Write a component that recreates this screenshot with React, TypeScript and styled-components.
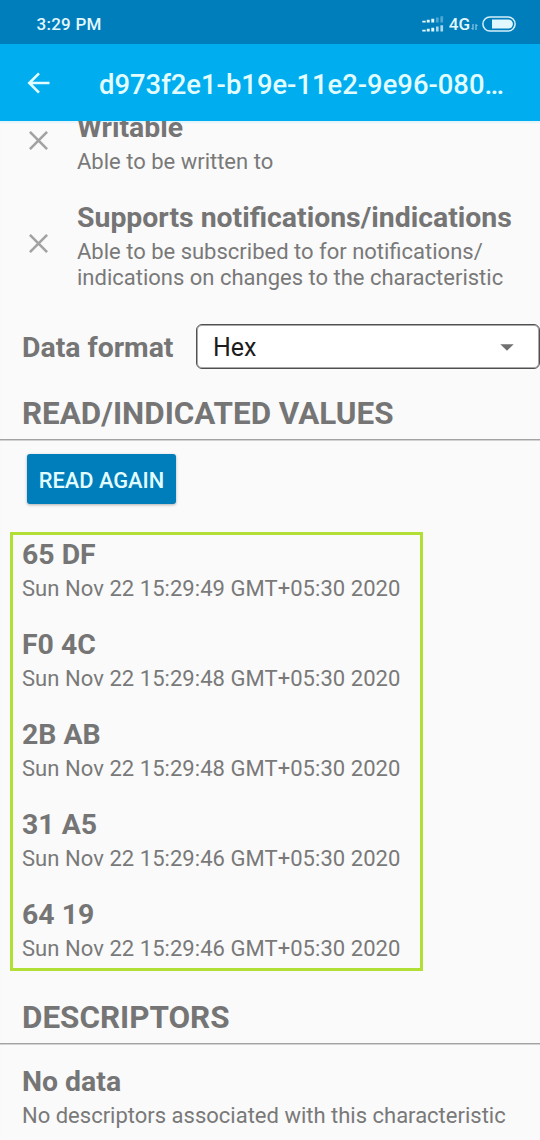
import React from 'react';
import styled, { createGlobalStyle } from 'styled-components';

const GlobalStyle = createGlobalStyle`
  * { box-sizing: border-box; }
  body {
    margin: 0;
    background: #fafafa;
    font-family: Roboto, "Liberation Sans", sans-serif;
    color: #757575;
  }
  svg { flex: none; display: block; }
`;

const Screen = styled.div`
  display: flex;
  flex-direction: column;
  width: 540px;
  height: 1140px;
  overflow: hidden;
  background: #fafafa;
`;

const StatusBar = styled.div`
  display: flex;
  flex: none;
  align-items: center;
  justify-content: space-between;
  height: 44px;
  padding: 4px 24px 0 36.5px;
  background: #007dbb;
  color: #e2f8ff;
`;

const Clock = styled.span`
  font-size: 17px;
  font-weight: 500;
  line-height: 20px;
  letter-spacing: 0.25px;
`;

const StatusIcons = styled.div`
  display: flex;
  align-items: center;
`;

const Network = styled.span`
  margin: 0 1px 0 5px;
  font-size: 17px;
  font-weight: 500;
  line-height: 20px;
`;

const ArrowsSlot = styled.span`
  padding: 6px 4px 0 0;
`;

const AppBar = styled.header`
  display: flex;
  flex: none;
  align-items: center;
  height: 77px;
  padding: 0 30px 0 27px;
  background: #00adef;
  color: #e2fdff;
`;

const Title = styled.h1`
  flex: 1;
  margin: 0 0 0 49px;
  padding-top: 5px;
  font-size: 27.4px;
  font-weight: 500;
  line-height: 33px;
  white-space: nowrap;
`;

const Content = styled.main`
  flex: 1;
  min-height: 0;
  overflow: hidden;
  box-shadow: inset 0 2px 1px #e3f4fb;
`;

const PropertyList = styled.div`
  display: flex;
  flex-direction: column;
  gap: 26px;
  margin-top: -10px;
`;

const Property = styled.div`
  display: flex;
  align-items: center;
  padding-left: 29px;
`;

const CrossSlot = styled.span`
  display: flex;
  width: 48px;
  padding-bottom: 5px;
`;

const Heading = styled.div`
  font-size: 28.4px;
  font-weight: 700;
  line-height: 33px;
  white-space: nowrap;
`;

const Detail = styled.div<{ $spacing?: number }>`
  margin-top: 5px;
  color: #797979;
  font-size: 22px;
  line-height: 26px;
  letter-spacing: ${(p) => p.$spacing ?? 0}px;
  white-space: nowrap;
`;

const FormatRow = styled.div`
  display: flex;
  align-items: center;
  margin-top: 33px;
  padding-left: 22px;
`;

const FormatLabel = styled(Heading)`
  padding-top: 2px;
`;

const Select = styled.div`
  display: flex;
  align-items: center;
  justify-content: space-between;
  width: 344px;
  height: 45px;
  margin-left: auto;
  padding: 2px 25px 0 16px;
  border: 1px solid #505050;
  border-radius: 6px;
  background: #fff;
  box-shadow: inset 0 0 0 1px #a8a8a8;
  color: #1c1c1c;
  font-size: 25px;
`;

const SectionTitle = styled.h2<{ $top: number }>`
  margin: ${(p) => p.$top}px 0 0;
  padding: 0 22px 8px;
  border-bottom: 1px solid #a3a3a3;
  box-shadow: 0 1px 0 #d2d2d2;
  font-size: 31.4px;
  font-weight: 700;
  line-height: 35px;
  white-space: nowrap;
`;

const ReadButton = styled.button`
  display: block;
  width: 149px;
  height: 50px;
  margin: 14px 0 0 27px;
  padding: 3px 0 0;
  border: 0;
  border-radius: 3px;
  background: #007dbb;
  box-shadow: 0 1px 3px rgba(0, 0, 0, 0.3);
  color: #e2fdff;
  font-family: inherit;
  font-size: 21.8px;
  font-weight: 500;
  line-height: 25px;
`;

const Readings = styled.div`
  display: flex;
  flex-direction: column;
  gap: 26px;
  width: 413px;
  height: 439px;
  margin: 28px 0 0 10px;
  padding: 3px 9px 0;
  border: 3px solid #b2df35;
`;

const Empty = styled.div`
  padding: 21px 22px 0;
`;

const Cross = () => (
  <svg width="19" height="19" viewBox="0 0 19 19" fill="none" stroke="#a2a2a2" strokeWidth="2.6">
    <path d="M0.9 0.9 18.1 18.1M18.1 0.9 0.9 18.1" />
  </svg>
);

const Signal = () => (
  <svg width="22" height="17" viewBox="0 0 22 17" fill="#e2f8ff">
    {[0, 9].map((y) => (
      <g key={y} transform={`translate(0 ${y})`}>
        <path d="M0.3 4.7h3.4v1.8H0.3zM4.8 3.8h2.9v2.7H4.8zM9.3 2.8h2.9v3.7H9.3z" />
        <path d="M14 1.6h2.6v4.9H14zM18.4 0.3h2.7v6.2h-2.7z" opacity={y ? 0.75 : 0.35} />
      </g>
    ))}
  </svg>
);

const DataArrows = () => (
  <svg width="7" height="8" viewBox="0 0 7 8" fill="none" stroke="#a9d8ee" strokeWidth="1">
    <path d="M2 1v5.5M2 6.5 0.5 5M5 7V1.5M5 1.5 6.5 3" />
  </svg>
);

const Battery = () => (
  <svg width="34" height="16" viewBox="0 0 34 16">
    <rect x="0.9" y="0.9" width="32.2" height="14.2" rx="7.1" fill="none" stroke="#d4f1fc" strokeWidth="1.5" />
    <path d="M10 3.4h16.3a4.6 4.6 0 0 1 0 9.2H10z" fill="#e2f8ff" />
  </svg>
);

const BackArrow = () => (
  <svg width="23" height="22" viewBox="0 0 23 22" fill="none" stroke="#e2fdff" strokeWidth="2.6">
    <path d="M22.5 11H3M12 1.3 2.3 11 12 20.7" />
  </svg>
);

const Caret = () => (
  <svg width="14" height="7" viewBox="0 0 14 7" fill="#707070">
    <path d="M0.3 0.2h13.4L7 6.8z" />
  </svg>
);

const readings = [
  { value: '65 DF', time: '15:29:49' },
  { value: 'F0 4C', time: '15:29:48' },
  { value: '2B AB', time: '15:29:48' },
  { value: '31 A5', time: '15:29:46' },
  { value: '64 19', time: '15:29:46' },
];

export default function App() {
  return (
    <Screen>
      <GlobalStyle />
      <StatusBar>
        <Clock>3:29 PM</Clock>
        <StatusIcons>
          <Signal />
          <Network>4G</Network>
          <ArrowsSlot><DataArrows /></ArrowsSlot>
          <Battery />
        </StatusIcons>
      </StatusBar>
      <AppBar>
        <BackArrow />
        <Title>d973f2e1-b19e-11e2-9e96-080…</Title>
      </AppBar>
      <Content>
        <PropertyList>
          <Property>
            <CrossSlot><Cross /></CrossSlot>
            <div>
              <Heading>Writable</Heading>
              <Detail>Able to be written to</Detail>
            </div>
          </Property>
          <Property>
            <CrossSlot><Cross /></CrossSlot>
            <div>
              <Heading>Supports notifications/indications</Heading>
              <Detail>
                Able to be subscribed to for notifications/
                <br />
                indications on changes to the characteristic
              </Detail>
            </div>
          </Property>
        </PropertyList>
        <FormatRow>
          <FormatLabel>Data format</FormatLabel>
          <Select>
            Hex
            <Caret />
          </Select>
        </FormatRow>
        <SectionTitle $top={27}>READ/INDICATED VALUES</SectionTitle>
        <ReadButton>READ AGAIN</ReadButton>
        <Readings>
          {readings.map((r) => (
            <div key={r.value}>
              <Heading>{r.value}</Heading>
              <Detail $spacing={0.05}>Sun Nov 22 {r.time} GMT+05:30 2020</Detail>
            </div>
          ))}
        </Readings>
        <SectionTitle $top={29}>DESCRIPTORS</SectionTitle>
        <Empty>
          <Heading>No data</Heading>
          <Detail>No descriptors associated with this characteristic</Detail>
        </Empty>
      </Content>
    </Screen>
  );
}
